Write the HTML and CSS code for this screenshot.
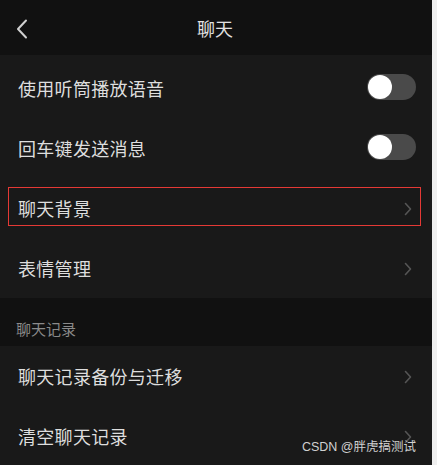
FILE: index.html
```html
<!DOCTYPE html>
<html lang="zh">
<head>
<meta charset="utf-8">
<link rel="stylesheet" href="styles.css">
</head>
<body>
<div class="screen">
  <header class="nav">
    <svg class="back" width="12" height="20" viewBox="0 0 12 20"><path d="M10 1.5 L2 10 L10 18.5" fill="none" stroke="#d0d0d0" stroke-width="2" stroke-linecap="round" stroke-linejoin="round"/></svg>
    <div class="title">聊天</div>
  </header>
  <section class="group first">
    <div class="row"><span class="label">使用听筒播放语音</span><span class="toggle"><span class="knob"></span></span></div>
    <div class="row"><span class="label">回车键发送消息</span><span class="toggle"><span class="knob"></span></span></div>
    <div class="row"><span class="hl"></span><span class="label">聊天背景</span><svg class="chev" width="8" height="14" viewBox="0 0 8 14"><path d="M1.5 1.5 L6.5 7 L1.5 12.5" fill="none" stroke="#555" stroke-width="1.6" stroke-linecap="round" stroke-linejoin="round"/></svg></div>
    <div class="row"><span class="label">表情管理</span><svg class="chev" width="8" height="14" viewBox="0 0 8 14"><path d="M1.5 1.5 L6.5 7 L1.5 12.5" fill="none" stroke="#555" stroke-width="1.6" stroke-linecap="round" stroke-linejoin="round"/></svg></div>
  </section>
  <div class="section-title">聊天记录</div>
  <section class="group">
    <div class="row"><span class="label">聊天记录备份与迁移</span><svg class="chev" width="8" height="14" viewBox="0 0 8 14"><path d="M1.5 1.5 L6.5 7 L1.5 12.5" fill="none" stroke="#555" stroke-width="1.6" stroke-linecap="round" stroke-linejoin="round"/></svg></div>
    <div class="row"><span class="label">清空聊天记录</span><svg class="chev" width="8" height="14" viewBox="0 0 8 14"><path d="M1.5 1.5 L6.5 7 L1.5 12.5" fill="none" stroke="#555" stroke-width="1.6" stroke-linecap="round" stroke-linejoin="round"/></svg></div>
  </section>
  <div class="watermark">CSDN @胖虎搞测试</div>
</div>
</body>
</html>
```
FILE: styles.css
```css
html, body {
  margin: 0;
  padding: 0;
  background: #efefef;
  height: 465px;
  overflow: hidden;
}
.screen {
  position: relative;
  width: 432px;
  height: 465px;
  background: #191919;
  font-family: "Noto Sans CJK SC", "Noto Sans", sans-serif;
  color: #dcdcdc;
}
.nav {
  height: 55px;
  background: #111111;
  display: flex;
  align-items: center;
  justify-content: center;
  position: relative;
}
.back {
  position: absolute;
  left: 16px;
  top: 19px;
}
.title {
  font-size: 18px;
  color: #e2e2e2;
  margin-left: -2px;
}
.group {
  background: #191919;
}
.group.first {
  padding-top: 3px;
}
.row {
  position: relative;
  height: 60px;
  display: flex;
  align-items: center;
  justify-content: space-between;
  padding: 0 19px 0 18px;
}
.label {
  font-size: 18px;
  color: #dedede;
  letter-spacing: 0.3px;
}
.toggle {
  width: 49px;
  height: 26px;
  border-radius: 13px;
  background: #4a4a4a;
  display: flex;
  align-items: center;
  padding-left: 1px;
  box-sizing: border-box;
  margin-right: -3px;
  margin-top: -2px;
}
.knob {
  width: 24px;
  height: 24px;
  border-radius: 50%;
  background: #ffffff;
}
.chev {
  margin-right: 1px;
  margin-top: 2px;
}
.hl {
  position: absolute;
  left: 8px;
  top: 9px;
  width: 411px;
  height: 37px;
  border: 1px solid #e53935;
}
.section-title {
  height: 48px;
  background: #111111;
  box-sizing: border-box;
  padding: 22px 0 0 16px;
  font-size: 15px;
  color: #8a8a8a;
  line-height: 18px;
}
.watermark {
  position: absolute;
  right: 16px;
  bottom: 10px;
  font-family: "Liberation Sans", "Noto Sans CJK SC", sans-serif;
  font-size: 12.5px;
  color: #d0d0d0;
  line-height: 15px;
}
```
